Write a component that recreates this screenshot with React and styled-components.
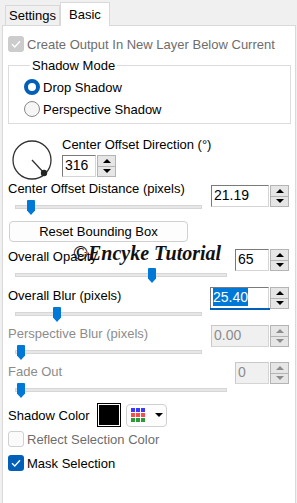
import React from "react";
import styled, { createGlobalStyle, css } from "styled-components";

const GlobalStyle = createGlobalStyle`
  html, body {
    margin: 0;
    padding: 0;
    background: #f0f0f0;
  }
  body {
    font-family: "Liberation Sans", Arial, sans-serif;
    font-size: 13px;
    color: #000;
  }
`;

const Page = styled.div`
  width: 297px;
  height: 503px;
  display: flex;
  flex-direction: column;
  background: #f0f0f0;
  overflow: hidden;
`;

const TabBar = styled.div`
  height: 25px;
  display: flex;
  align-items: flex-end;
  padding-left: 5px;
`;

const Tab = styled.div`
  box-sizing: border-box;
  height: ${({ $active }) => ($active ? "24px" : "20px")};
  padding: 0 ${({ $active }) => ($active ? "8px" : "3px")};
  display: flex;
  align-items: center;
  font-size: 13px;
  background: ${({ $active }) => ($active ? "#fff" : "#f0f0f0")};
  border: 1px solid #d9d9d9;
  border-bottom: none;
  margin-bottom: ${({ $active }) => ($active ? "-1px" : "0")};
  position: relative;
  z-index: ${({ $active }) => ($active ? 1 : 0)};
`;

const Panel = styled.div`
  flex: 1;
  margin: 0 1px 0 2px;
  background: #fff;
  border: 1px solid #d9d9d9;
  border-bottom: none;
  padding: 10px 6px 0 5px;
  position: relative;
`;

const CheckRow = styled.label`
  display: flex;
  align-items: center;
  gap: 3px;
  height: 16px;
  margin-top: ${({ $mt }) => $mt || 0}px;
  color: ${({ $disabled }) => ($disabled ? "#6d6d6d" : "#000")};
`;

const Check = styled.span`
  box-sizing: border-box;
  width: 16px;
  height: 16px;
  border-radius: 3px;
  display: flex;
  align-items: center;
  justify-content: center;
  ${({ $state }) =>
    $state === "checked"
      ? css`
          background: #005fb8;
        `
      : $state === "disabledChecked"
      ? css`
          background: #cccccc;
        `
      : css`
          background: #fbfbfb;
          border: 1px solid #d0d0d0;
        `}
`;

const Group = styled.fieldset`
  margin: 6px 0 0 0;
  padding: 6px 0 0 15px;
  border: 1px solid #dcdcdc;
  height: 58px;
  box-sizing: content-box;
  width: 266px;
`;

const Legend = styled.legend`
  padding: 0 2px;
  margin-left: 6px;
  font-size: 13px;
  line-height: 15px;
`;

const RadioRow = styled.div`
  display: flex;
  align-items: center;
  gap: 3px;
  height: 16px;
  margin-bottom: 6px;
`;

const Radio = styled.span`
  box-sizing: border-box;
  width: 16px;
  height: 16px;
  border-radius: 50%;
  ${({ $on }) =>
    $on
      ? css`
          border: 4px solid #005fb8;
          background: #fff;
        `
      : css`
          border: 1px solid #8a8a8a;
          background: #f6f6f6;
        `}
`;

const DialBlock = styled.div`
  display: flex;
  margin-top: 13px;
  height: 44px;
`;

const DialBox = styled.div`
  width: 51px;
  padding: 2px 0 0 3px;
`;

const DialSide = styled.div`
  display: flex;
  flex-direction: column;
  gap: 3px;
`;

const Label = styled.div`
  font-size: 13px;
  line-height: 15px;
  white-space: nowrap;
  color: ${({ $disabled }) => ($disabled ? "#8c8c8c" : "#000")};
`;

const SliderRow = styled.div`
  display: grid;
  grid-template-columns: 1fr auto;
  grid-template-rows: 15px 19px;
  margin-top: ${({ $mt }) => $mt || 0}px;
`;

const SpinSlot = styled.div`
  grid-column: 2;
  grid-row: 1 / span 2;
  align-self: start;
  margin-top: ${({ $mt }) => $mt || 0}px;
`;

const Track = styled.div`
  grid-column: 1;
  grid-row: 2;
  position: relative;
  margin-left: 7px;
  width: ${({ $w }) => $w}px;
  height: 4px;
  margin-top: ${({ $mt }) => $mt || 9}px;
  background: #e7e7e7;
  border: 1px solid #d6d6d6;
  box-sizing: border-box;
`;

const Thumb = styled.span`
  position: absolute;
  top: -6px;
  width: 8px;
  height: 15px;
  background: #0078d7;
  border-radius: 1px 1px 0 0;
  clip-path: polygon(0 0, 100% 0, 100% 70%, 50% 100%, 0 70%);
`;

const Spin = styled.div`
  display: flex;
  height: 22px;
`;

const SpinField = styled.div`
  box-sizing: border-box;
  width: ${({ $w }) => $w}px;
  height: 22px;
  border: 1px solid ${({ $disabled }) => ($disabled ? "#c8c8c8" : "#7a7a7a")};
  border-right-color: #d5d5d5;
  border-bottom-color: #d5d5d5;
  background: ${({ $disabled }) => ($disabled ? "#f0f0f0" : "#fff")};
  color: ${({ $disabled }) => ($disabled ? "#8c8c8c" : "#000")};
  font-size: 14px;
  line-height: 19px;
  padding-left: 2px;
  position: relative;
  ${({ $focus }) =>
    $focus &&
    css`
      &::after {
        content: "";
        position: absolute;
        left: -1px;
        right: -2px;
        bottom: -2px;
        height: 2px;
        background: #005fb8;
      }
    `}
`;

const Selected = styled.span`
  background: #0078d7;
  color: #fff;
  padding: 1px 0;
`;

const SpinButtons = styled.div`
  box-sizing: border-box;
  width: 19px;
  margin-left: 1px;
  height: 22px;
  border: 1px solid #b4b4b4;
  background: #e1e1e1;
  display: flex;
  flex-direction: column;
`;

const SpinBtn = styled.div`
  flex: 1;
  display: flex;
  align-items: center;
  justify-content: center;
  border-top: ${({ $down }) => ($down ? "1px solid #b4b4b4" : "none")};
  background: #e6e6e6;
`;

const Arrow = styled.span`
  width: 0;
  height: 0;
  border-left: 4px solid transparent;
  border-right: 4px solid transparent;
  ${({ $down, $disabled }) =>
    $down
      ? css`
          border-top: 4px solid ${$disabled ? "#8c8c8c" : "#000"};
        `
      : css`
          border-bottom: 4px solid ${$disabled ? "#8c8c8c" : "#000"};
        `}
`;

const ResetButton = styled.div`
  box-sizing: border-box;
  margin: 6px 0 0 1px;
  width: 179px;
  height: 21px;
  border: 1px solid #d0d0d0;
  border-radius: 4px;
  background: #fdfdfd;
  display: flex;
  align-items: center;
  justify-content: center;
  font-size: 13px;
`;

const Watermark = styled.div`
  position: absolute;
  left: 70px;
  top: 216px;
  font-family: "Liberation Serif", "DejaVu Serif", serif;
  font-style: italic;
  font-weight: bold;
  font-size: 20px;
  color: #111;
  pointer-events: none;
`;

const ColorRow = styled.div`
  display: flex;
  align-items: center;
  height: 24px;
  margin-top: 5px;
`;

const Swatch = styled.div`
  box-sizing: border-box;
  width: 24px;
  height: 24px;
  margin-left: 7px;
  border: 1px solid #000;
  box-shadow: inset 0 0 0 1px #fff;
  background: #000;
`;

const PickerButton = styled.div`
  box-sizing: border-box;
  width: 41px;
  height: 23px;
  margin-left: 5px;
  border: 1px solid #d0d0d0;
  border-radius: 4px;
  background: #fdfdfd;
  display: flex;
  align-items: center;
  padding-left: 3px;
  gap: 8px;
`;

const TickIcon = ({ color = "#fff" }) => (
  <svg width="10" height="8" viewBox="0 0 10 8">
    <path d="M1 4.2 L3.8 7 L9 1.2" fill="none" stroke={color} strokeWidth="1.3" />
  </svg>
);

const Dial = () => (
  <svg width="42" height="42" viewBox="0 0 42 42">
    <circle cx="21" cy="21" r="19" fill="#fff" stroke="#333" strokeWidth="1.3" />
    <line x1="21" y1="21" x2="33" y2="34" stroke="#333" strokeWidth="1.3" />
    <circle cx="33" cy="34" r="3.2" fill="#222" />
  </svg>
);

const GridIcon = () => {
  const rows = ["#3b3bff", "#ff4b4b", "#2b9a3a"];
  return (
    <svg width="17" height="16" viewBox="0 0 17 16">
      <rect x="0" y="0" width="17" height="16" fill="#fff" />
      {rows.map((c, r) =>
        [0, 1, 2].map((k) => (
          <rect key={`${r}-${k}`} x={1 + k * 5} y={1 + r * 5} width="4" height="4" fill={c} />
        ))
      )}
    </svg>
  );
};

const SpinBox = ({ width, value, disabled, focus }) => (
  <Spin>
    <SpinField $w={width} $disabled={disabled} $focus={focus}>
      {focus ? <Selected>{value}</Selected> : value}
    </SpinField>
    <SpinButtons>
      <SpinBtn>
        <Arrow $disabled={disabled} />
      </SpinBtn>
      <SpinBtn $down>
        <Arrow $down $disabled={disabled} />
      </SpinBtn>
    </SpinButtons>
  </Spin>
);

const Slider = ({ width, pos, mt }) => (
  <Track $w={width} $mt={mt}>
    <Thumb style={{ left: pos }} />
  </Track>
);

export default function App() {
  return (
    <Page>
      <GlobalStyle />
      <TabBar>
        <Tab>Settings</Tab>
        <Tab $active>Basic</Tab>
      </TabBar>
      <Panel>
        <CheckRow $disabled>
          <Check $state="disabledChecked">
            <TickIcon />
          </Check>
          Create Output In New Layer Below Current
        </CheckRow>

        <Group>
          <Legend>Shadow Mode</Legend>
          <RadioRow>
            <Radio $on />
            Drop Shadow
          </RadioRow>
          <RadioRow>
            <Radio />
            Perspective Shadow
          </RadioRow>
        </Group>

        <DialBlock>
          <DialBox>
            <Dial />
          </DialBox>
          <DialSide>
            <Label>Center Offset Direction (°)</Label>
            <SpinBox width={34} value="316" />
          </DialSide>
        </DialBlock>

        <SliderRow $mt={0}>
          <Label>Center Offset Distance (pixels)</Label>
          <SpinSlot $mt={4}>
            <SpinBox width={58} value="21.19" />
          </SpinSlot>
          <Slider width={187} pos={11} />
        </SliderRow>

        <ResetButton>Reset Bounding Box</ResetButton>

        <SliderRow $mt={7}>
          <Label>Overall Opacity</Label>
          <SpinSlot $mt={0}>
            <SpinBox width={34} value="65" />
          </SpinSlot>
          <Slider width={212} pos={132} />
        </SliderRow>

        <SliderRow $mt={5}>
          <Label>Overall Blur (pixels)</Label>
          <SpinSlot $mt={-1}>
            <SpinBox width={59} value="25.40" focus />
          </SpinSlot>
          <Slider width={187} pos={37} />
        </SliderRow>

        <SliderRow $mt={4}>
          <Label $disabled>Perspective Blur (pixels)</Label>
          <SpinSlot $mt={-1}>
            <SpinBox width={58} value="0.00" disabled />
          </SpinSlot>
          <Slider width={187} pos={1} />
        </SliderRow>

        <SliderRow $mt={4}>
          <Label $disabled>Fade Out</Label>
          <SpinSlot $mt={-2}>
            <SpinBox width={34} value="0" disabled />
          </SpinSlot>
          <Slider width={212} pos={1} />
        </SliderRow>

        <ColorRow>
          <Label>Shadow Color</Label>
          <Swatch />
          <PickerButton>
            <GridIcon />
            <Arrow $down />
          </PickerButton>
        </ColorRow>

        <CheckRow $disabled $mt={4}>
          <Check />
          Reflect Selection Color
        </CheckRow>

        <CheckRow $mt={8}>
          <Check $state="checked">
            <TickIcon />
          </Check>
          Mask Selection
        </CheckRow>

        <Watermark>©Encyke Tutorial</Watermark>
      </Panel>
    </Page>
  );
}
